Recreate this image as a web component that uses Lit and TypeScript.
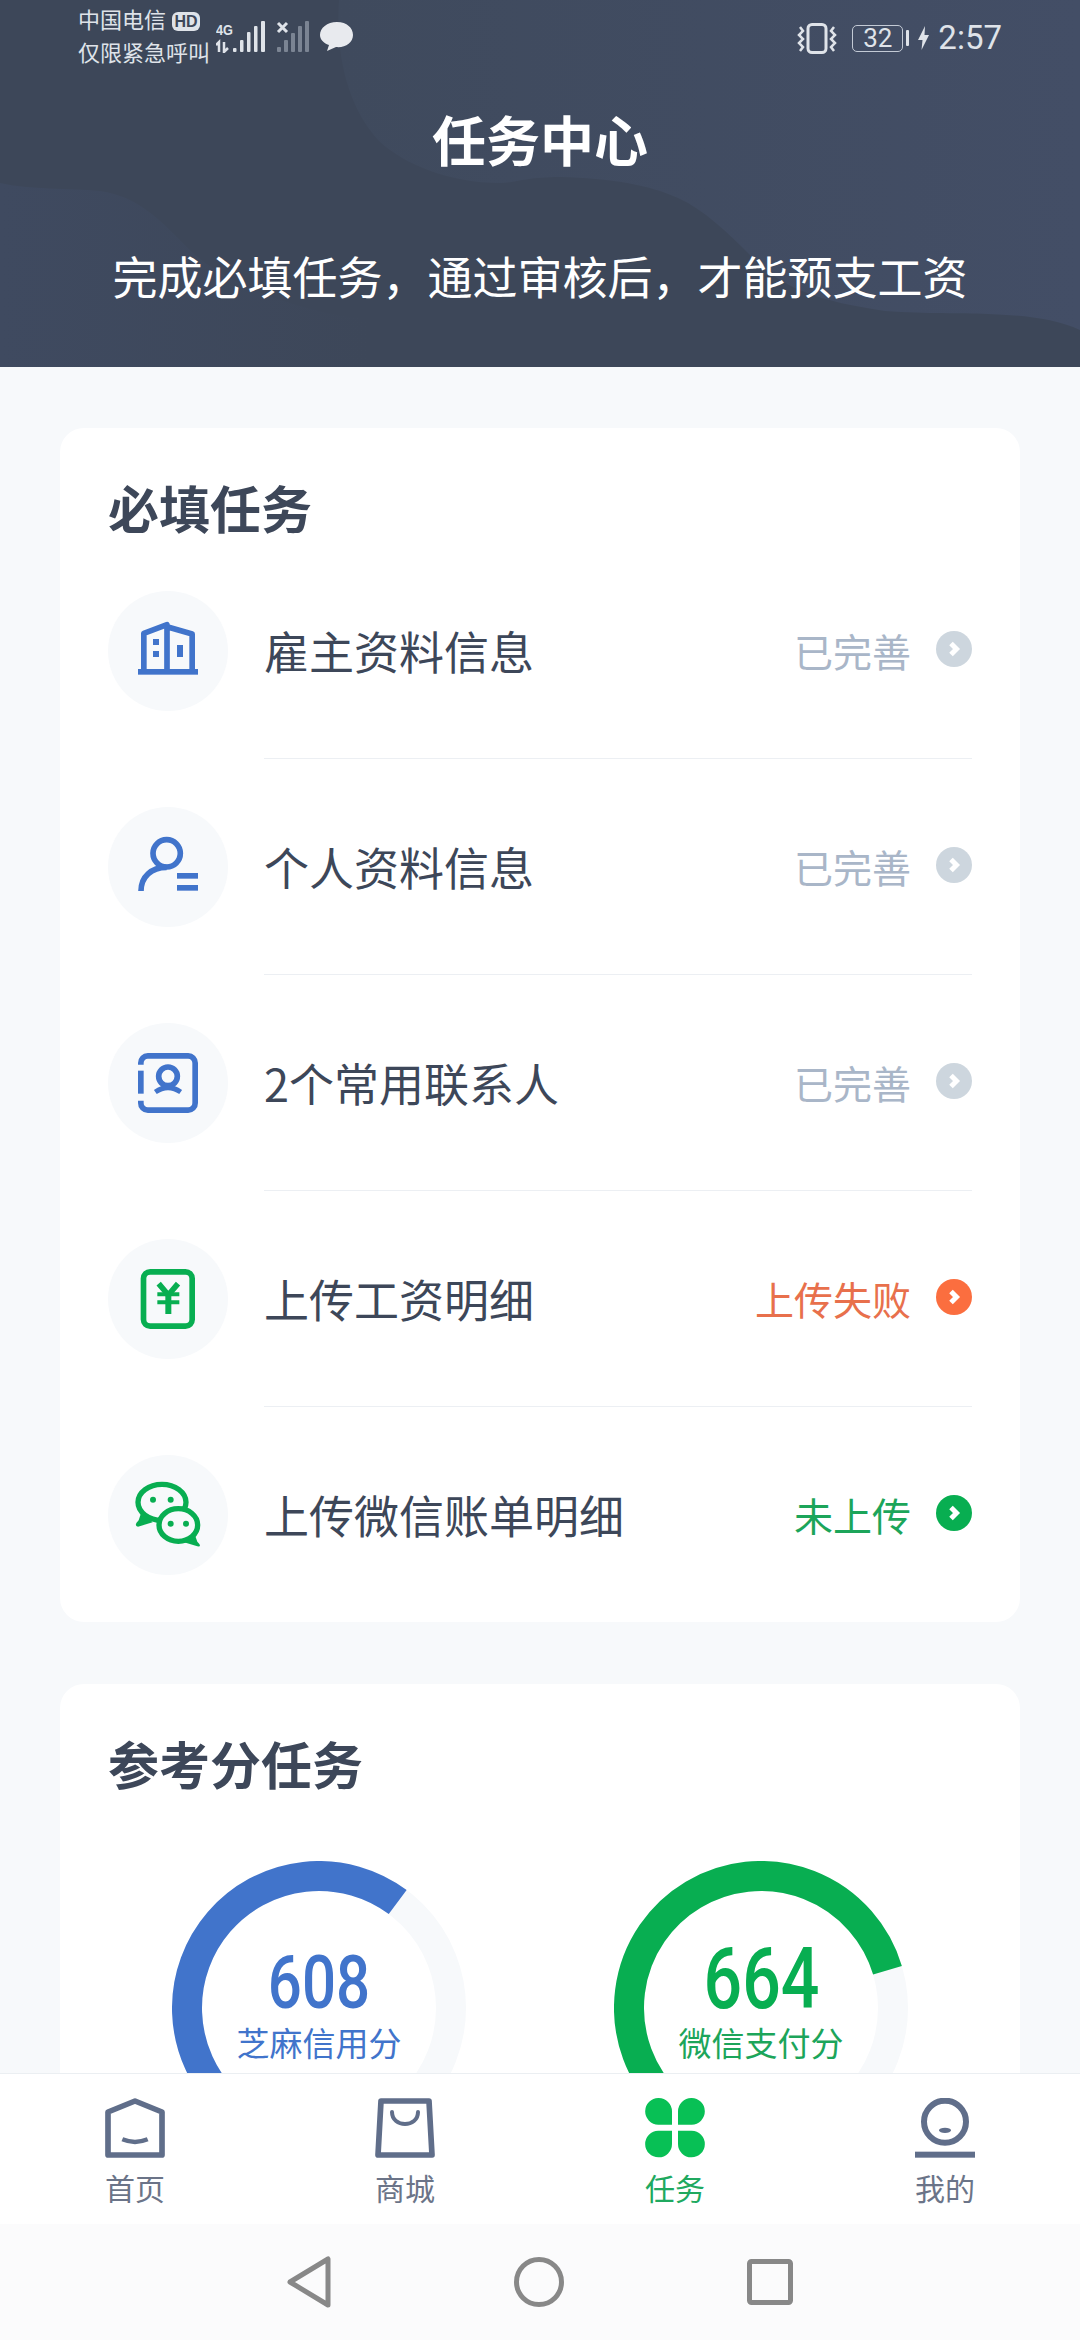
import { css, html, LitElement, svg } from 'lit';
import { customElement } from 'lit/decorators.js';

type Tone = 'done' | 'fail' | 'todo';

interface Task {
    label: string;
    status: string;
    tone: Tone;
    icon: unknown;
}

// task icons are drawn on a 300 unit box, 3 units to the pixel
const buildingIcon = svg`
    <g transform="translate(60 57)">
        <path class="line blue" stroke-width="17" d="M17.500 150V40L87 14V150M87 20L162.500 42V150"/>
        <g class="fill blue">
            <rect x="0" y="147" width="180" height="17"/>
            <rect x="45" y="57" width="18" height="18"/>
            <rect x="45" y="93" width="18" height="18"/>
            <rect x="117" y="75" width="18" height="36"/>
        </g>
    </g>`;

const personIcon = svg`
    <g transform="translate(60 54)">
        <g class="line blue" stroke-width="17">
            <circle cx="86" cy="55" r="41"/>
            <path d="M9 168C9 125 40 97 86 97"/>
        </g>
        <g class="fill blue">
            <rect x="117" y="114" width="63" height="17"/>
            <rect x="117" y="150" width="63" height="17"/>
        </g>
    </g>`;

const contactIcon = svg`
    <g class="line blue" stroke-width="17">
        <path d="M68.500 95V90A21 21 0 0 1 89.500 68.500H210A21 21 0 0 1 231.500 90V210A21 21 0 0 1 210 231.500H89.500A21 21 0 0 1 68.500 210V203"/>
        <path d="M68.500 113V182"/>
        <circle cx="150" cy="130" r="28"/>
    </g>
    <path class="line blue" stroke-width="15" d="M112 177Q150 151 188 177"/>`;

const yuanIcon = svg`
    <rect class="line green" stroke-width="17" x="76.500" y="68.500" width="146" height="163" rx="20"/>
    <g class="line green">
        <path stroke-width="17" stroke-linejoin="miter" d="M122 104L151 138L180 104"/>
        <path stroke-width="12" d="M118 136H184M118 160H184"/>
        <path stroke-width="18" d="M151 136V195"/>
    </g>`;

const wechatIcon = svg`
    <ellipse class="line green" stroke-width="16" cx="132" cy="112" rx="72" ry="54"/>
    <path class="fill green" d="M70 142L62 166Q46 182 60 185L104 172Z"/>
    <ellipse class="line green bubble" stroke-width="16" cx="181" cy="180" rx="58" ry="49"/>
    <path class="fill green" d="M230 208L238 230Q254 246 238 244L198 232Z"/>
    <g class="fill green">
        <circle cx="105" cy="104" r="9"/>
        <circle cx="158" cy="104" r="9"/>
        <circle cx="158" cy="176" r="9"/>
        <circle cx="204" cy="176" r="9"/>
    </g>`;

const tasks: Task[] = [
    { label: '雇主资料信息', status: '已完善', tone: 'done', icon: buildingIcon },
    { label: '个人资料信息', status: '已完善', tone: 'done', icon: personIcon },
    { label: '2个常用联系人', status: '已完善', tone: 'done', icon: contactIcon },
    { label: '上传工资明细', status: '上传失败', tone: 'fail', icon: yuanIcon },
    { label: '上传微信账单明细', status: '未上传', tone: 'todo', icon: wechatIcon },
];

const tabs = [
    {
        label: '首页',
        icon: svg`
            <path class="line slate" stroke-width="17" d="M90 9L9 42V171H171V42Z"/>
            <path class="line slate" stroke-width="13" d="M52 124Q90 140 128 124"/>`,
    },
    {
        label: '商城',
        icon: svg`
            <path class="line slate" stroke-width="17" d="M18 9H162L171 171H9Z"/>
            <path class="line slate" stroke-width="12" stroke-linecap="round" d="M51 42C51 90 129 90 129 42"/>`,
    },
    {
        label: '任务',
        active: true,
        icon: svg`
            <g class="fill clover">
                <path d="M41 0A40 40 0 0 1 81 40V80H40A40 40 0 0 1 41 0Z"/>
                <path d="M139 0A40 40 0 0 0 99 40V80H140A40 40 0 0 0 139 0Z"/>
                <path d="M41 178A40 40 0 0 0 81 138V98H40A40 40 0 0 0 41 178Z"/>
                <path d="M139 178A40 40 0 0 1 99 138V98H140A40 40 0 0 1 139 178Z"/>
            </g>`,
    },
    {
        label: '我的',
        icon: svg`
            <circle class="line slate" stroke-width="18" cx="90" cy="71" r="63"/>
            <g class="fill slate">
                <ellipse cx="90" cy="97" rx="18" ry="8"/>
                <rect x="0" y="161" width="180" height="18"/>
            </g>`,
    },
];

// ring angle is measured from 12 o'clock, the start sits behind the tab bar
function arc(end: number) {
    const point = (deg: number) => {
        const rad = (deg * Math.PI) / 180;
        return `${147 + 132 * Math.sin(rad)} ${147 - 132 * Math.cos(rad)}`;
    };
    const large = end + 135 > 180 ? 1 : 0;
    return `M${point(-135)}A132 132 0 ${large} 1 ${point(end)}`;
}

@customElement('app-root')
export class AppRoot extends LitElement {
    static override styles = css`
        :host {
            display: flex;
            flex-direction: column;
            width: 1080px;
            height: 2340px;
            overflow: hidden;
            background: #f7f9fb;
            font-family: 'Noto Sans CJK SC', 'Noto Sans', sans-serif;
            color: #3d4759;
        }
        svg {
            display: block;
            flex: none;
        }
        .line {
            fill: none;
            stroke-linejoin: round;
        }
        .line.blue { stroke: #4174cb; }
        .line.green { stroke: #08ae51; }
        .line.slate { stroke: #606e8a; }
        .line.bubble { fill: #f7f9fb; }
        .fill.blue { fill: #4174cb; }
        .fill.green { fill: #08ae51; }
        .fill.slate { fill: #606e8a; }
        .fill.clover { fill: #08c055; }

        .header {
            position: relative;
            flex: none;
            height: 367px;
            background: #3d4759;
            color: #fff;
            text-align: center;
        }
        .waves {
            position: absolute;
            inset: 0;
        }
        .status-bar {
            position: relative;
            display: flex;
            align-items: flex-start;
            height: 72px;
            padding: 2px 78px 0;
            color: #dfe3e9;
        }
        .carrier {
            width: 134px;
            font-size: 22px;
            line-height: 33px;
            text-align: left;
            white-space: nowrap;
        }
        .hd {
            display: inline-block;
            width: 28px;
            height: 19px;
            margin-left: 6px;
            border-radius: 6px;
            background: #dfe3e9;
            color: #3d4759;
            font: 700 16px/19px 'Liberation Sans', sans-serif;
            text-align: center;
            vertical-align: 1px;
        }
        .signals {
            margin: 19px 0 0 4px;
        }
        .tiny {
            fill: #dfe3e9;
            font: 700 15px 'Liberation Sans', sans-serif;
        }
        .status-right {
            display: flex;
            align-items: center;
            margin: 19px 0 0 auto;
        }
        .battery {
            width: 51px;
            height: 27px;
            margin-left: 15px;
            box-sizing: border-box;
            border: 1.5px solid #c3cad5;
            border-radius: 5px;
            font: 400 26px/24px Roboto, sans-serif;
            text-align: center;
        }
        .nub {
            width: 3px;
            height: 16px;
            margin: 0 9px 0 3px;
            border-radius: 1px;
            background: #dfe3e9;
        }
        .time {
            margin-left: 9px;
            font: 400 33px/34px Roboto, sans-serif;
        }
        .title {
            position: relative;
            margin: 31px 0 0;
            font-size: 54px;
            font-weight: 700;
            line-height: 68px;
        }
        .subtitle {
            position: relative;
            margin: 69px 0 0;
            font-size: 45px;
            font-weight: 400;
            line-height: 68px;
        }

        .main {
            flex: 1;
            min-height: 0;
            overflow: hidden;
            display: flex;
            flex-direction: column;
            gap: 62px;
            padding: 61px 60px 0;
        }
        .card {
            flex: none;
            padding: 46px 48px 0;
            border-radius: 24px;
            background: #fff;
        }
        .card-title {
            margin: 0 0 3px;
            font-size: 51px;
            font-weight: 700;
            line-height: 66px;
        }
        .row {
            display: grid;
            grid-template-columns: 120px 1fr;
            column-gap: 36px;
            align-items: center;
        }
        .badge {
            display: grid;
            place-items: center;
            width: 120px;
            height: 120px;
            border-radius: 50%;
            background: #f7f9fb;
        }
        .row-body {
            display: flex;
            align-items: center;
            height: 215px;
            border-bottom: 1px solid #eceff3;
        }
        .row:last-child .row-body {
            border-bottom: none;
        }
        .row-label {
            flex: 1;
            font-size: 45px;
            line-height: 60px;
        }
        .row-status {
            margin: -2px 25px 0 0;
            font-size: 39px;
            line-height: 52px;
        }
        .chevron {
            display: grid;
            place-items: center;
            width: 36px;
            height: 36px;
            margin-top: -4px;
            border-radius: 50%;
        }
        .done .row-status { color: #a9b6c8; }
        .done .chevron { background: #cdd6de; }
        .fail .row-status { color: #e8704c; }
        .fail .chevron { background: #fb6e3f; }
        .todo .row-status { color: #1ca55a; }
        .todo .chevron { background: #08ae51; }

        .gauges {
            display: flex;
            justify-content: center;
            gap: 148px;
            margin-top: 65px;
            height: 294px;
        }
        .gauge {
            display: grid;
            width: 294px;
            height: 294px;
        }
        .gauge > * {
            grid-area: 1 / 1;
        }
        .track {
            fill: none;
            stroke: #f7f9fb;
            stroke-width: 30;
        }
        .bar {
            fill: none;
            stroke-width: 30;
        }
        .score {
            display: flex;
            flex-direction: column;
            align-items: center;
            padding-top: 91px;
        }
        .score-num {
            margin-bottom: 10px;
            font: 500 75px/60px Roboto, sans-serif;
            transform: scaleX(0.8);
        }
        .score-name {
            font-size: 33px;
            line-height: 40px;
        }
        .zhima .bar { stroke: #4174cb; }
        .zhima .score { color: #4174cb; }
        .weixin .bar { stroke: #08ae51; }
        .weixin .score {
            padding-top: 86px;
            color: #1ca55a;
        }
        .weixin .score-num {
            margin-bottom: 11px;
            color: #08ae51;
            font-size: 85px;
            line-height: 64px;
        }

        .tabs {
            flex: none;
            display: grid;
            grid-template-columns: repeat(4, 270px);
            height: 150px;
            border-top: 1px solid #ebeff2;
            background: #fff;
        }
        .tab {
            display: flex;
            flex-direction: column;
            align-items: center;
            padding-top: 24px;
            color: #6b7488;
            font-size: 30px;
            line-height: 38px;
        }
        .tab span {
            margin-top: 10px;
        }
        .tab.active {
            color: #20a95f;
        }
        .nav {
            flex: none;
            display: flex;
            justify-content: center;
            align-items: center;
            gap: 183px;
            height: 116px;
            background: #fbfbfc;
        }
        .nav-line {
            fill: none;
            stroke: #888;
            stroke-width: 5;
            stroke-linejoin: round;
        }
    `;

    override render() {
        return html`
            ${this.renderHeader()}
            <div class="main">
                <section class="card">
                    <h2 class="card-title">必填任务</h2>
                    ${tasks.map((task) => this.renderTask(task))}
                </section>
                <section class="card">
                    <h2 class="card-title">参考分任务</h2>
                    <div class="gauges">
                        ${this.renderGauge('zhima', 36.6, '608', '芝麻信用分')}
                        ${this.renderGauge('weixin', 73.4, '664', '微信支付分')}
                    </div>
                </section>
            </div>
            <nav class="tabs">
                ${tabs.map(
                    (tab) => html`
                        <div class="tab ${tab.active ? 'active' : ''}">
                            <svg width="60" height="60" viewBox="0 0 180 180">${tab.icon}</svg>
                            <span>${tab.label}</span>
                        </div>
                    `,
                )}
            </nav>
            <div class="nav">
                <svg width="44" height="52" viewBox="0 0 44 52">
                    <path class="nav-line" d="M3 26L41 3V49Z"/>
                </svg>
                <svg width="50" height="50" viewBox="0 0 50 50">
                    <circle class="nav-line" cx="25" cy="25" r="22.500"/>
                </svg>
                <svg width="46" height="46" viewBox="0 0 46 46">
                    <rect class="nav-line" x="2.500" y="2.500" width="41" height="41" rx="2"/>
                </svg>
            </div>
        `;
    }

    private renderHeader() {
        return html`
            <header class="header">
                <svg class="waves" width="1080" height="367" viewBox="0 0 1080 367">
                    <defs>
                        <linearGradient id="wave-top" x1="0" x2="1" y1="0" y2="0">
                            <stop offset="0" stop-color="#3f4a5d"/>
                            <stop offset="1" stop-color="#434e66"/>
                        </linearGradient>
                        <linearGradient id="wave-left" x1="0" x2="1" y1="0" y2="0">
                            <stop offset="0" stop-color="#3f4a60"/>
                            <stop offset="1" stop-color="#3d4759"/>
                        </linearGradient>
                    </defs>
                    <path fill="url(#wave-top)" d="M339 0C335 60 350 110 379 141C405 165 450 183 500 183C515 183 525 177 560 177C610 178 650 185 678 198C705 210 730 235 754 259C780 285 810 300 885 311C930 314 960 313 988 314C1020 315 1055 318 1080 330V0Z"/>
                    <path fill="url(#wave-left)" d="M0 183C30 190 70 188 100 191C140 196 165 225 190 250C215 275 280 310 372 320V367H0Z"/>
                </svg>
                <div class="status-bar">
                    <div class="carrier">中国电信<span class="hd">HD</span><br />仅限紧急呼叫</div>
                    ${this.renderSignals()}
                    <div class="status-right">
                        <svg width="40" height="31" viewBox="0 0 40 31">
                            <rect x="11" y="1.500" width="18" height="28" rx="4" fill="none" stroke="#dfe3e9" stroke-width="3"/>
                            <path d="M3 4L6 8L2 12L6 16L2 20L6 24L3 28M37 4L34 8L38 12L34 16L38 20L34 24L37 28" fill="none" stroke="#dfe3e9" stroke-width="2.500"/>
                        </svg>
                        <div class="battery">32</div>
                        <div class="nub"></div>
                        <svg width="11" height="24" viewBox="0 0 11 24">
                            <path d="M7 0L0 14H4.500L3.500 24L11 9H6.500Z" fill="#dfe3e9"/>
                        </svg>
                        <div class="time">2:57</div>
                    </div>
                </div>
                <h1 class="title">任务中心</h1>
                <p class="subtitle">完成必填任务，通过审核后，才能预支工资</p>
            </header>
        `;
    }

    private renderSignals() {
        return html`
            <svg class="signals" width="140" height="32" viewBox="216 21 140 32">
                <text class="tiny" x="216" y="35" textLength="17" lengthAdjust="spacingAndGlyphs">4G</text>
                <path d="M219 52V42L216 45M224 42V52L228 48" fill="none" stroke="#dfe3e9" stroke-width="2.500"/>
                <g fill="#dfe3e9">
                    <rect x="233" y="48" width="3.500" height="4" rx="1"/>
                    <rect x="240" y="40" width="3.500" height="12" rx="1"/>
                    <rect x="247" y="32" width="3.500" height="20" rx="1"/>
                    <rect x="254" y="26" width="3.500" height="26" rx="1"/>
                    <rect x="261" y="21" width="4" height="31" rx="1"/>
                </g>
                <path d="M278 23L287 32M287 23L278 32" stroke="#dfe3e9" stroke-width="3"/>
                <g fill="#7b8493">
                    <rect x="277" y="47" width="4" height="5" rx="1"/>
                    <rect x="284" y="40" width="4" height="12" rx="1"/>
                    <rect x="291" y="33" width="4" height="19" rx="1"/>
                    <rect x="298" y="26" width="4" height="26" rx="1"/>
                    <rect x="305" y="21" width="4" height="31" rx="1"/>
                </g>
                <path d="M337 22C347 22 353 28 353 35C353 43 345 48 336 47L327 51L329 45C323 43 320 39 320 35C320 28 327 22 337 22Z" fill="#e8eaee"/>
            </svg>
        `;
    }

    private renderTask(task: Task) {
        return html`
            <div class="row ${task.tone}">
                <div class="badge">
                    <svg width="100" height="100" viewBox="0 0 300 300">${task.icon}</svg>
                </div>
                <div class="row-body">
                    <div class="row-label">${task.label}</div>
                    <div class="row-status">${task.status}</div>
                    <div class="chevron">
                        <svg width="14" height="16" viewBox="0 0 14 16">
                            <path d="M4 2.500L9.500 8L4 13.500" fill="none" stroke="#fff" stroke-width="5"/>
                        </svg>
                    </div>
                </div>
            </div>
        `;
    }

    private renderGauge(kind: string, end: number, value: string, name: string) {
        return html`
            <div class="gauge ${kind}">
                <svg width="294" height="294" viewBox="0 0 294 294">
                    <circle class="track" cx="147" cy="147" r="132"/>
                    <path class="bar" d="${arc(end)}"/>
                </svg>
                <div class="score">
                    <div class="score-num">${value}</div>
                    <div class="score-name">${name}</div>
                </div>
            </div>
        `;
    }
}
